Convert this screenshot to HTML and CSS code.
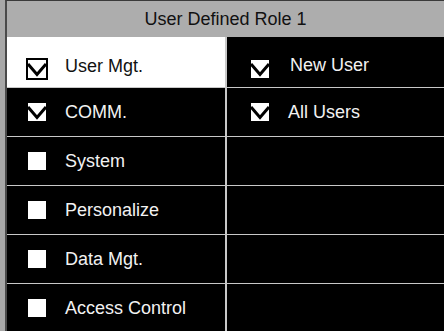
FILE: index.html
```html
<!DOCTYPE html>
<html>
<head>
  <title>User Defined Role 1</title>
  <link rel="stylesheet" href="styles.css">
</head>
<body>
  <div class="panel">
    <div class="title">User Defined Role 1</div>
    <div class="grid">
      <!-- row 1 -->
      <div class="cell left first active">
        <svg class="box" viewBox="0 0 22 22"><rect x="1" y="1" width="20" height="20"/><polyline points="2,6 11,16.5 20,6"/></svg>
        <span>User Mgt.</span>
      </div>
      <div class="cell right first">
        <svg class="box" viewBox="0 0 22 22"><rect x="1" y="1" width="20" height="20"/><polyline points="2,6 11,16.5 20,6"/></svg>
        <span class="up">New User</span>
      </div>
      <!-- row 2 -->
      <div class="cell left">
        <svg class="box" viewBox="0 0 22 22"><rect x="1" y="1" width="20" height="20"/><polyline points="2,6 11,16.5 20,6"/></svg>
        <span>COMM.</span>
      </div>
      <div class="cell right">
        <svg class="box" viewBox="0 0 22 22"><rect x="1" y="1" width="20" height="20"/><polyline points="2,6 11,16.5 20,6"/></svg>
        <span>All Users</span>
      </div>
      <!-- row 3 -->
      <div class="cell left">
        <svg class="box" viewBox="0 0 22 22"><rect x="1" y="1" width="20" height="20"/></svg>
        <span>System</span>
      </div>
      <div class="cell right"></div>
      <!-- row 4 -->
      <div class="cell left">
        <svg class="box" viewBox="0 0 22 22"><rect x="1" y="1" width="20" height="20"/></svg>
        <span>Personalize</span>
      </div>
      <div class="cell right"></div>
      <!-- row 5 -->
      <div class="cell left">
        <svg class="box" viewBox="0 0 22 22"><rect x="1" y="1" width="20" height="20"/></svg>
        <span>Data Mgt.</span>
      </div>
      <div class="cell right"></div>
      <!-- row 6 -->
      <div class="cell left">
        <svg class="box" viewBox="0 0 22 22"><rect x="1" y="1" width="20" height="20"/></svg>
        <span>Access Control</span>
      </div>
      <div class="cell right"></div>
    </div>
  </div>
</body>
</html>
```

FILE: styles.css
```css
body {
  margin: 0;
  background-color: #a8a8a8;
  font-family: "Liberation Sans", Arial, sans-serif;
  font-size: 18px;
}

.panel {
  margin-left: 5px;
  height: 331px;
  border-top: 1px solid #3a3a3a;
  border-left: 2px solid #4a4a4a;
  overflow: hidden;
}

.title {
  height: 36px;
  line-height: 36px;
  text-align: center;
  color: #111;
  background-color: #adadad;
}

.grid {
  display: grid;
  grid-template-columns: 218px 1fr;
  grid-template-rows: 50px repeat(5, 48px);
  gap: 1px 2px;
  background-color: #c8c8c8;
}

.cell {
  display: flex;
  align-items: center;
  box-sizing: border-box;
  background-color: #000;
  color: #f2f2f2;
}

.cell.left {
  padding-left: 19px;
}

.cell.right {
  padding-left: 22px;
}

.cell.first {
  padding-top: 9px;
}

.cell.active {
  background-color: #fff;
  color: #111;
}

.box {
  width: 22px;
  height: 22px;
  margin-right: 17px;
  flex-shrink: 0;
}

.first .box {
  margin-top: 4px;
}

.box rect {
  fill: #fff;
  stroke: #000;
  stroke-width: 2;
}

.box polyline {
  fill: none;
  stroke: #000;
  stroke-width: 3;
}

.up {
  margin-left: 2px;
  margin-bottom: 3px;
}
```
